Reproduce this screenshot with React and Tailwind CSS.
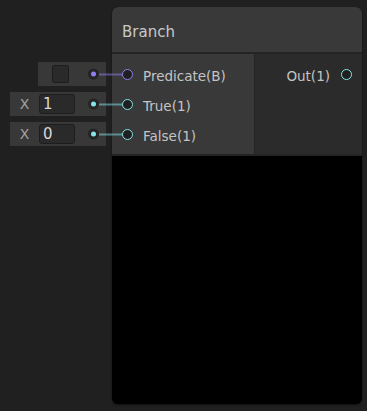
import React from "react";

const PURPLE = "#8f7ff0";
const CYAN = "#84e4e7";

function Port({ color }) {
  return (
    <span
      className="block w-[11px] h-[11px] rounded-full border-[1.5px] bg-[#1f1f1f] shrink-0"
      style={{ borderColor: color }}
    />
  );
}

function Edge({ color, left }) {
  // dot inside the field + wire running to the node port
  return (
    <div className="absolute top-1/2 -translate-y-1/2 flex items-center" style={{ left }}>
      <span className="w-[11px] h-[11px] rounded-full bg-[#242424] flex items-center justify-center">
        <span className="w-[5px] h-[5px] rounded-full" style={{ background: color }} />
      </span>
      <span className="relative h-[2px] w-[24px] opacity-50" style={{ background: color }} />
    </div>
  );
}

function InputRow({ label, color, field }) {
  return (
    <div className="relative h-[30px] flex items-center pl-[10px]">
      {field}
      <Edge color={color} left={-24} />
      <Port color={color} />
      <span className="ml-[10px] pt-[4px] text-[13.5px] text-[#c4c4c4]">{label}</span>
    </div>
  );
}

function BoolField() {
  return (
    <div className="absolute right-[calc(100%+6px)] top-1/2 -translate-y-1/2 w-[68px] h-[24px] bg-[#383838] flex items-center pl-[14px]">
      <span className="w-[17px] h-[18px] bg-[#2a2a2a] border border-[#1c1c1c] rounded-[2px]" />
    </div>
  );
}

function NumField({ value }) {
  return (
    <div className="absolute right-[calc(100%+6px)] top-1/2 -translate-y-1/2 w-[96px] h-[24px] bg-[#383838] flex items-center">
      <span className="w-[29px] text-center text-[14px] text-[#a2a2a2]">X</span>
      <span className="w-[36px] h-[20px] bg-[#2a2a2a] border border-[#1d1d1d] rounded-[3px] pl-[3px] text-[15px] leading-[19px] text-[#d8d8d8]">
        {value}
      </span>
    </div>
  );
}

export default function App() {
  return (
    <div
      className="w-[367px] h-[411px] bg-[#202020] overflow-hidden pt-[7px] pl-[112px]"
      style={{ fontFamily: "'DejaVu Sans', sans-serif" }}
    >
      <div className="w-[250px] h-[397px] rounded-[6px] bg-black flex flex-col shadow-[0_1px_2px_rgba(0,0,0,0.6)]">
        <div className="h-[45px] bg-[#393939] rounded-t-[6px] flex items-center pl-[10px] pt-[5px] text-[15px] text-[#c8c8c8]">
          Branch
        </div>
        <div className="h-[2px] bg-[#242424]" />
        <div className="flex h-[100px]">
          <div className="w-[142px] bg-[#393939] pt-[5px]">
            <InputRow label="Predicate(B)" color={PURPLE} field={<BoolField />} />
            <InputRow label="True(1)" color={CYAN} field={<NumField value="1" />} />
            <InputRow label="False(1)" color={CYAN} field={<NumField value="0" />} />
          </div>
          <div className="w-[1px] bg-[#242424]" />
          <div className="flex-1 bg-[#2b2b2b] pt-[5px]">
            <div className="h-[30px] flex items-center justify-end pr-[10px]">
              <span className="text-[13.5px] pt-[4px] text-[#c4c4c4] mr-[11px]">Out(1)</span>
              <Port color={CYAN} />
            </div>
          </div>
        </div>
        <div className="h-[2px] bg-[#242424]" />
      </div>
    </div>
  );
}
